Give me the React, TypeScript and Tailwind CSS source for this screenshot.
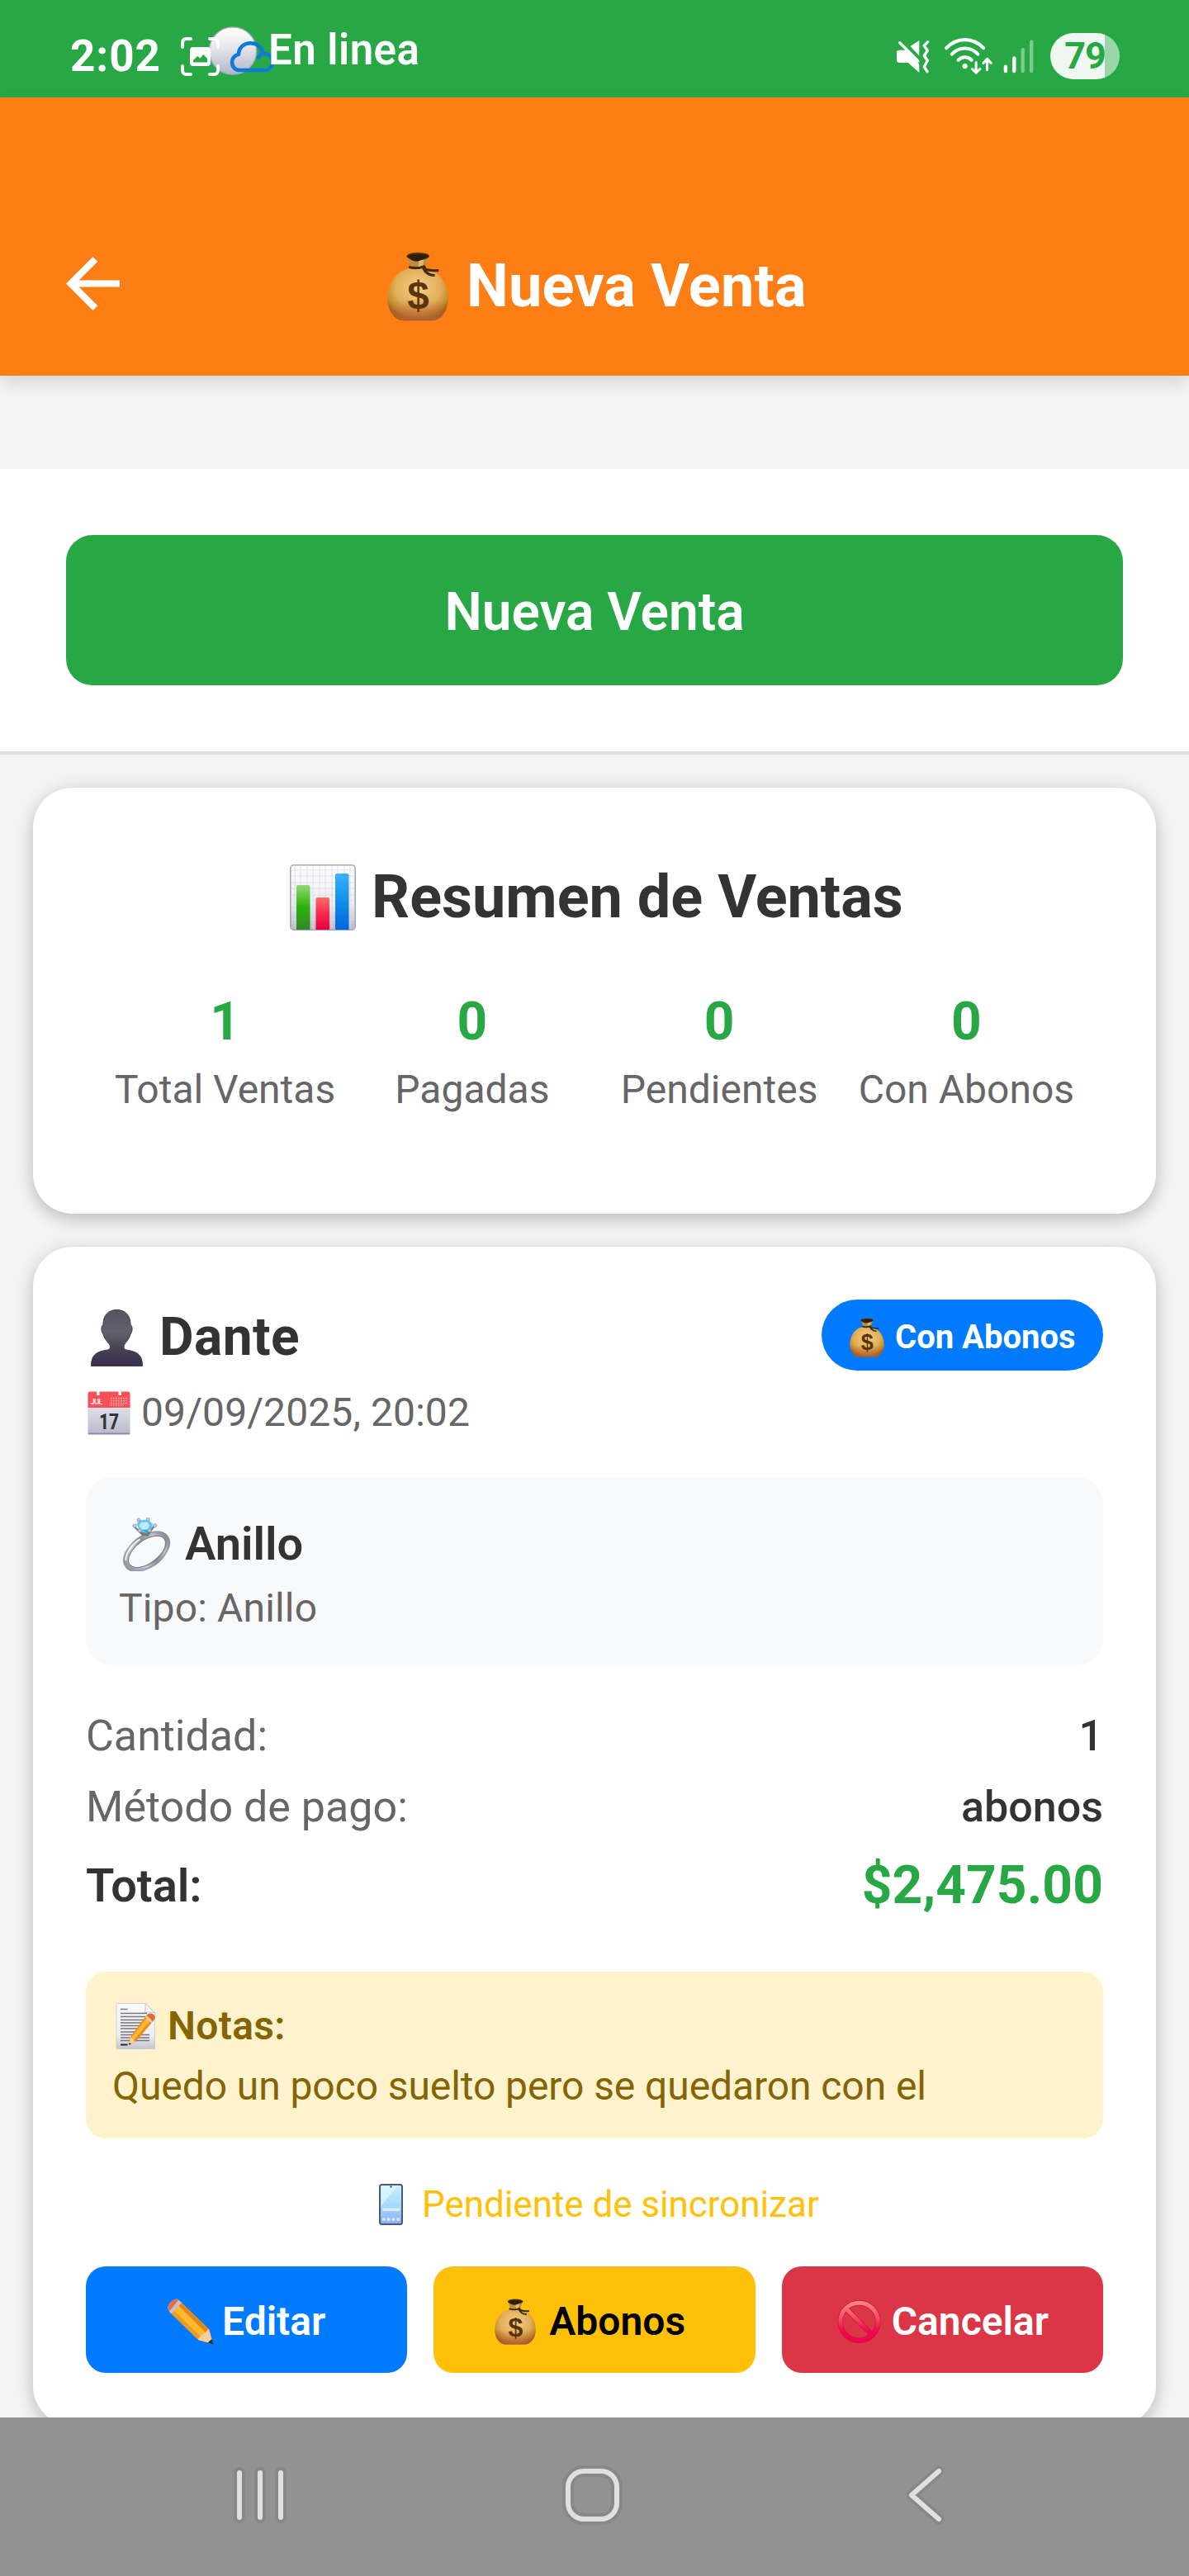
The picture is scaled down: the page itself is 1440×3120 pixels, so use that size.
import type { ReactNode } from "react";

function MoneyBag({ className, id }: { className: string; id: string }) {
  return (
    <svg className={className} viewBox="116 105 221 251" preserveAspectRatio="none">
      <defs>
        <radialGradient id={id} cx="0.5" cy="0.38" r="0.62">
          <stop offset="0" stopColor="#f3cf86" />
          <stop offset="0.6" stopColor="#e3af5a" />
          <stop offset="0.85" stopColor="#c58c2c" />
          <stop offset="1" stopColor="#935f10" />
        </radialGradient>
        <linearGradient id={id + "b"} x1="0" y1="0" x2="0" y2="1">
          <stop offset="0.6" stopColor="#b9603a" stopOpacity="0" />
          <stop offset="1" stopColor="#b9603a" stopOpacity="0.8" />
        </linearGradient>
      </defs>
      <path d="M197 163C145 176 117 224 117 274C117 315 140 354 175 354H277C313 354 336 315 336 274C336 226 311 181 262 166Z" fill={`url(#${id})`} />
      <path d="M197 163C145 176 117 224 117 274C117 315 140 354 175 354H277C313 354 336 315 336 274C336 226 311 181 262 166Z" fill={`url(#${id}b)`} />
      <path d="M190 128L200 158H252L265 126Z" fill="#c08d3c" />
      <path d="M228 130L231 160L244 158L250 126Z" fill="#e2b878" />
      <ellipse cx="227" cy="121" rx="41" ry="14" fill="#5a3d12" />
      <path d="M188 122C200 132 212 144 232 138C248 130 262 128 267 120C262 110 192 110 188 122Z" fill="#2e2008" />
      <path d="M194 160C212 166 236 164 250 158L252 166C262 172 282 174 302 172M246 164C254 180 270 190 288 190" fill="none" stroke="#3f2c10" strokeWidth="9" strokeLinejoin="round" />
      <text x="228" y="310" textAnchor="middle" fontFamily="Liberation Sans, sans-serif" fontWeight="700" fontSize="142" fill="#5b3509">$</text>
    </svg>
  );
}

function BarChart() {
  return (
    <svg className="h-20 w-20 shrink-0" viewBox="0 0 80 80">
      <defs>
        <linearGradient id="cb" x1="0" y1="0" x2="0" y2="1">
          <stop offset="0" stopColor="#ffffff" />
          <stop offset="0.6" stopColor="#ededf1" />
          <stop offset="1" stopColor="#b9b7c6" />
        </linearGradient>
        <linearGradient id="cg" x1="0" y1="0" x2="0" y2="1">
          <stop offset="0" stopColor="#94d973" />
          <stop offset="0.5" stopColor="#2bb10a" />
          <stop offset="1" stopColor="#2f8a2a" />
        </linearGradient>
        <linearGradient id="cr" x1="0" y1="0" x2="0" y2="1">
          <stop offset="0" stopColor="#ff6b68" />
          <stop offset="0.5" stopColor="#fb2a4b" />
          <stop offset="1" stopColor="#e4003f" />
        </linearGradient>
        <linearGradient id="cl" x1="0" y1="0" x2="0" y2="1">
          <stop offset="0" stopColor="#3fb1f8" />
          <stop offset="0.5" stopColor="#0f8fe6" />
          <stop offset="1" stopColor="#0563e3" />
        </linearGradient>
      </defs>
      <rect x="0.8" y="0.8" width="78.4" height="78.4" rx="4" fill="url(#cb)" stroke="#a9a8b4" strokeWidth="1.6" />
      <path d="M6 2V78M13 2V78M21 2V78M28 2V78M36 2V78M43 2V78M51 2V78M58 2V78M66 2V78M73 2V78M2 7H78M2 14H78M2 22H78M2 29H78M2 37H78M2 44H78M2 52H78M2 59H78M2 67H78" stroke="#d6dbe4" strokeWidth="0.8" fill="none" />
      <path d="M8 79V27Q8 25 10 25H22.500Q24.500 25 24.500 27V79Z" fill="url(#cg)" />
      <path d="M31.500 79V42Q31.500 40 33.500 40H46Q48 40 48 42V79Z" fill="url(#cr)" />
      <path d="M55 79V13Q55 11 57 11H69.500Q71.500 11 71.500 13V79Z" fill="url(#cl)" />
    </svg>
  );
}

function Person() {
  return (
    <svg className="h-[69px] w-[63px] shrink-0" viewBox="0 0 63 69">
      <defs>
        <linearGradient id="pg" x1="0" y1="0" x2="0" y2="1">
          <stop offset="0" stopColor="#55545f" />
          <stop offset="0.4" stopColor="#62606c" />
          <stop offset="0.7" stopColor="#454253" />
          <stop offset="1" stopColor="#3b2c50" />
        </linearGradient>
      </defs>
      <path d="M31.500 0.500C42 0.500 48 7 48 18.500C51 20 50.500 27 48 30C46 38 40 41 40 45C40 50 44 48.500 50 50.500C59 53 62.500 58 62.500 68.500H0.500C0.500 58 4 53 13 50.500C19 48.500 23.500 50 23.500 45C23.500 41 17 38 15 30C12.500 27 12 20 15 18.500C15 7 21 0.500 31.500 0.500Z" fill="url(#pg)" stroke="#3d3a4b" strokeWidth="1" />
    </svg>
  );
}

function CalendarIcon() {
  return (
    <svg className="h-[53px] w-[52px] shrink-0" viewBox="0 0 52 53">
      <defs>
        <linearGradient id="kg" x1="0" y1="0" x2="0" y2="1">
          <stop offset="0" stopColor="#f6f6f8" />
          <stop offset="1" stopColor="#b9b8cb" />
        </linearGradient>
      </defs>
      <rect x="0.500" y="1" width="51" height="51" rx="2" fill="url(#kg)" />
      <rect x="0.500" y="50.500" width="51" height="2" rx="1" fill="#8f8ca6" />
      <path d="M0.500 20V2.500Q0.500 0.500 2.500 0.500H11V5H14.500V0.500H37.500V5H41V0.500H49.500Q51.500 0.500 51.500 2.500V20Z" fill="#fb4f57" />
      <path d="M28 8.500H49M28 11.500H49M28 14.500H49M28 17H44" stroke="#ffc0bd" strokeWidth="1.600" strokeDasharray="1.600 1.400" />
      <text x="3.500" y="15.500" fontFamily="Roboto, sans-serif" fontWeight="700" fontSize="9.500" textLength="15" fill="#ffe3e0">JUL</text>
      <text x="26" y="45.500" textAnchor="middle" fontFamily="Roboto, sans-serif" fontWeight="800" fontSize="26" textLength="24" lengthAdjust="spacingAndGlyphs" fill="#333238">17</text>
    </svg>
  );
}

function Ring() {
  return (
    <svg className="h-[66px] w-[59px] shrink-0" viewBox="52 50 178 202" preserveAspectRatio="none">
      <defs>
        <linearGradient id="rg" x1="0" y1="0" x2="1" y2="0">
          <stop offset="0" stopColor="#9a9aa6" />
          <stop offset="0.3" stopColor="#c9ccd4" />
          <stop offset="0.55" stopColor="#8b8d98" />
          <stop offset="0.8" stopColor="#c3c7cd" />
          <stop offset="1" stopColor="#8a8c96" />
        </linearGradient>
      </defs>
      <g transform="rotate(-37 141 179)">
        <ellipse cx="141" cy="179" rx="88" ry="51" fill="none" stroke="url(#rg)" strokeWidth="19" />
        <ellipse cx="141" cy="179" rx="93" ry="56" fill="none" stroke="#8f929c" strokeWidth="3" />
        <ellipse cx="142" cy="181" rx="79" ry="43" fill="none" stroke="#787a87" strokeWidth="3" />
        <path d="M60 160A88 51 0 0 1 150 128" fill="none" stroke="#eef1f4" strokeWidth="6" />
      </g>
      <path d="M93 84L126 118L146 120L171 82L150 104L134 108L112 100Z" fill="#6f7c86" stroke="#6f7c86" strokeWidth="5" strokeLinejoin="round" />
      <path d="M104 78L116 63L146 61L163 76L160 94L142 112L118 104Z" fill="#62c9f7" />
      <path d="M113 82L124 71L144 70L152 82L144 98L124 98Z" fill="#b9ecff" />
      <path d="M144 98L160 94L142 112L124 98Z" fill="#33a7e6" />
      <g fill="#c4ccd2" stroke="#7f8a93" strokeWidth="2">
        <circle cx="112" cy="62" r="6" />
        <circle cx="146" cy="60" r="6" />
        <circle cx="97" cy="84" r="6.500" />
        <circle cx="171" cy="83" r="6.500" />
        <circle cx="116" cy="101" r="6.500" />
        <circle cx="152" cy="101" r="6.500" />
      </g>
    </svg>
  );
}

function Memo() {
  return (
    <svg className="h-14 w-12 shrink-0" viewBox="0 0 48 56">
      <defs>
        <linearGradient id="mg" x1="0" y1="0" x2="0" y2="1">
          <stop offset="0" stopColor="#fbfbfc" />
          <stop offset="0.7" stopColor="#eeeef2" />
          <stop offset="1" stopColor="#c5c4d2" />
        </linearGradient>
      </defs>
      <path d="M1 0.500H36L47.500 12V55.500H1Z" fill="url(#mg)" stroke="#c6c5cd" strokeWidth="0.800" />
      <path d="M36 0.500C36.500 6 36 9 35 12C39 10.500 43 11 47.500 12Z" fill="#ffffff" stroke="#b5b4bd" strokeWidth="0.800" />
      <path d="M6 7.500H14.500M6 12.500H38M6 16.500H38M6 20.500H38M6 24H36M6 27.500H36M6 31H34M6 35H32M6 38.500H41M6 42H41M6 45.500H41" stroke="#77767f" strokeWidth="1.300" />
      <path d="M6 50.500H14.500" stroke="#2b2a30" strokeWidth="2" />
      <path d="M38 14L42 12.500Q48 13.500 47.500 18.500L45.500 22L24 47L16 51L18 41Z" fill="#f08a1d" />
      <path d="M38.500 17L43 20L22 45L19 42Z" fill="#ffb82e" />
      <path d="M18 41L24 47L16 51Z" fill="#f0cf9c" />
      <path d="M16.500 48L19 49.500L16 51Z" fill="#33302e" />
      <path d="M38 14L42 12.500Q48 13.500 47.500 18.500L45.500 22Z" fill="#e0673c" />
      <path d="M36.500 16L44 23.500" stroke="#d9d4d2" strokeWidth="2" />
    </svg>
  );
}

function PhoneEmoji() {
  return (
    <svg className="h-[50px] w-[29px] shrink-0" viewBox="0 0 29 50">
      <defs>
        <linearGradient id="fg" x1="0" y1="0" x2="0" y2="1">
          <stop offset="0" stopColor="#c9f1fb" />
          <stop offset="0.5" stopColor="#a9dcfa" />
          <stop offset="1" stopColor="#86aef8" />
        </linearGradient>
      </defs>
      <rect x="1" y="1" width="27" height="48" rx="2.500" fill="url(#fg)" stroke="#4d5b70" strokeWidth="2" />
      <path d="M2.500 27V2.500H22Z" fill="#e2f8fd" opacity="0.700" />
      <rect x="13.500" y="2.500" width="2" height="2" fill="#333e4f" />
      <rect x="4" y="29.500" width="21" height="3.500" fill="#d4edfd" />
      <path d="M4 43H25" stroke="#dbe9ff" strokeWidth="3.600" strokeDasharray="3.600 2.200" />
    </svg>
  );
}

function Pencil() {
  return (
    <svg className="h-[56px] w-[56px] shrink-0" viewBox="0 0 56 56">
      <path d="M0.500 12C0 7 6 1 11 0.500L15 3L50 37L55 55L37 50L3 17Z" fill="#f39a1c" />
      <path d="M6 13L12 7L46 41L40 46Z" fill="#ffb92f" />
      <path d="M12 7L16 5L50 38L46 41Z" fill="#e88316" />
      <path d="M50 37L55 55L37 50C38 46 40 46 41 45C43 42 45 42 46 41C47 39 48 38 50 37Z" fill="#f3cf9f" />
      <path d="M53.500 49L55.500 55.500L48.500 53.500Z" fill="#2f2c33" />
      <path d="M3 17L0.500 12C0 7 6 1 11 0.500L15 3L17 5L5 18Z" fill="#c9c2c4" />
      <path d="M2.500 15L0.500 12C0 7 6 1 11 0.500L13 2Z" fill="#e86a4c" />
    </svg>
  );
}

function Forbidden() {
  return (
    <svg className="h-[52px] w-[53px] shrink-0" viewBox="0 0 53 52">
      <defs>
        <linearGradient id="ng" gradientUnits="userSpaceOnUse" x1="0" y1="0" x2="0" y2="52">
          <stop offset="0" stopColor="#ff8c88" />
          <stop offset="0.450" stopColor="#fa4463" />
          <stop offset="0.700" stopColor="#f6064c" />
          <stop offset="1" stopColor="#f4004a" />
        </linearGradient>
      </defs>
      <circle cx="26.500" cy="26" r="22.800" fill="none" stroke="#b51f3c" strokeWidth="6.400" />
      <path d="M10.500 10L42.500 42" stroke="#b51f3c" strokeWidth="6.400" />
      <circle cx="26.500" cy="26" r="22.800" fill="none" stroke="url(#ng)" strokeWidth="5" />
      <path d="M10 9.500L43 42.500" stroke="url(#ng)" strokeWidth="5" />
    </svg>
  );
}

function StatusLeftIcons() {
  return (
    <svg className="ml-[25px] h-[62px] w-[115px] shrink-0" viewBox="218 31 115 62">
      <defs>
        <linearGradient id="ball" x1="0" y1="0" x2="0" y2="1">
          <stop offset="0" stopColor="#ffffff" />
          <stop offset="0.400" stopColor="#e8e8ec" />
          <stop offset="1" stopColor="#b4b6c9" />
        </linearGradient>
      </defs>
      <circle cx="282" cy="61.500" r="28.600" fill="url(#ball)" stroke="#a9acb8" strokeWidth="1.400" />
      <path d="M221 57V52Q221 47 226 47H231M254 47H259Q264 47 264 52V57M221 80V85Q221 90 226 90H231M254 90H259Q264 90 264 85V80" fill="none" stroke="#fff" strokeWidth="3.800" strokeLinecap="round" />
      <path fillRule="evenodd" d="M234 57H251Q255 57 255 61V76Q255 80 251 80H234Q230 80 230 76V61Q230 57 234 57ZM234 75.500H251V71L246.500 66L242.500 70.500L239 68L234 73Z" fill="#fff" />
      <path d="M313 69.500C314 66.500 318 64.500 321.500 65C327 66 330 70 330 75C330 81 326 85 320.500 85H290C285 85 281 81 281 75.500C281 70.500 284.500 66.500 289 66C289 58 295 52.200 303.500 52.200C311 52.200 316 56.500 318.500 64" fill="none" stroke="#0b7bdb" strokeWidth="4.600" strokeLinecap="round" strokeLinejoin="round" />
    </svg>
  );
}

function StatusBar() {
  return (
    <div className="flex h-[118px] w-full shrink-0 items-start bg-[#28a745] pl-[85px] pr-[84px] text-white">
      <span className="mt-[34px] w-[108px] whitespace-nowrap text-[53px] font-bold leading-[68px] tracking-[0.9px]">2:02</span>
      <div className="mt-[31px]">
        <StatusLeftIcons />
      </div>
      <span className="-ml-[8px] mt-[30px] whitespace-nowrap text-[51px] font-semibold leading-[62px] tracking-[0.45px]">En linea</span>
      <div className="ml-auto mt-[40px] flex h-[56px] items-center">
        <svg className="h-[41px] w-[41px]" viewBox="138 144 122 122">
          <path d="M141 191Q141 182 150 182H172L222 232V263L182 227H150Q141 227 141 218Z" fill="#fff" />
          <path d="M190 168L222 147V202Z" fill="#fff" />
          <path d="M152 155L218 221" stroke="#fff" strokeWidth="10" strokeLinecap="round" />
          <path d="M253 152L240 166L252 184L240 202L252 220L240 242L251 259" fill="none" stroke="#fff" strokeWidth="10" strokeLinecap="round" strokeLinejoin="round" />
        </svg>
        <svg className="ml-[17px] mt-[-1px] h-[46px] w-[60px]" viewBox="312 136 178 136">
          <g fill="none" stroke="#fff" strokeLinecap="round" strokeLinejoin="round">
            <path d="M321 175C360 135 416 135 455 175" strokeWidth="12" />
            <path d="M341 197C368 169 408 169 435 197" strokeWidth="12" />
            <path d="M364 218C378 204 398 204 412 218" strokeWidth="12" />
            <path d="M428 226V264M414 250L428 264L442 250M468 254V215M454 229L468 214L482 229" strokeWidth="9" />
          </g>
          <circle cx="388" cy="240" r="9" fill="#fff" />
        </svg>
        <svg className="ml-[12px] h-[41px] w-[38px]" viewBox="526 144 112 122">
          <g strokeWidth="13" strokeLinecap="round" stroke="#fff">
            <path d="M534 241V257M565 211V257" />
            <path d="M596 180V257M627 152V257" opacity="0.400" />
          </g>
        </svg>
        <div className="ml-[19px] flex h-[56px] w-[84px] items-center justify-center rounded-full bg-[linear-gradient(90deg,#eef8f0_78.500%,#9bd6a8_78.500%)]">
          <span className="text-[45px] font-bold leading-[54px] tracking-[-1px] text-[#28a745]">79</span>
        </div>
      </div>
    </div>
  );
}

function Header() {
  return (
    <header className="relative z-10 flex h-[337px] shrink-0 items-start bg-[#fd7e14] pl-20 shadow-[0_8px_20px_rgba(0,0,0,0.13)]">
      <svg className="mt-[193px] h-[65px] w-[65px] shrink-0" viewBox="4 4 16 16">
        <path d="M20 11H7.830l5.590-5.590L12 4l-8 8 8 8 1.410-1.410L7.830 13H20v-2z" fill="#fff" />
      </svg>
      <div className="ml-[324px] mt-[184px] flex items-center">
        <MoneyBag id="bagh" className="h-[84px] w-[74px] shrink-0" />
        <h1 className="ml-[22px] whitespace-nowrap text-[72px] font-bold leading-[90px] tracking-[0.2px] text-white">Nueva Venta</h1>
      </div>
    </header>
  );
}

function Stat({ value, label }: { value: string; label: string }) {
  return (
    <div className="flex flex-col items-center whitespace-nowrap">
      <span className="text-[64px] font-bold leading-[84px] text-[#28a745]">{value}</span>
      <span className="text-5xl leading-[80px] text-[#666]">{label}</span>
    </div>
  );
}

function DetailRow({ label, children }: { label: string; children: ReactNode }) {
  return (
    <div className="flex h-[86px] items-center justify-between text-[52px] leading-[70px]">
      <span className="text-[#666]">{label}</span>
      <span className="font-medium text-[#333]">{children}</span>
    </div>
  );
}

function SummaryCard() {
  return (
    <section className="mx-10 mt-10 h-[516px] shrink-0 rounded-[48px] bg-white px-20 pt-[88px] shadow-[0_8px_18px_rgba(0,0,0,0.15),0_2px_30px_rgba(0,0,0,0.10)]">
      <div className="flex h-[90px] items-center pl-[231px]">
        <BarChart />
        <h2 className="ml-[19px] whitespace-nowrap text-[72px] font-bold leading-[90px] text-[#333]">Resumen de Ventas</h2>
      </div>
      <div className="mt-[64px] grid grid-cols-4 pl-[3px]">
        <Stat value="1" label="Total Ventas" />
        <Stat value="0" label="Pagadas" />
        <Stat value="0" label="Pendientes" />
        <Stat value="0" label="Con Abonos" />
      </div>
    </section>
  );
}

function SaleCard() {
  return (
    <section className="mx-10 mt-10 h-[1428px] shrink-0 rounded-[48px] bg-white px-16 pt-16 shadow-[0_8px_18px_rgba(0,0,0,0.15),0_2px_30px_rgba(0,0,0,0.10)]">
      <div className="flex items-start justify-between">
        <div className="pt-1">
          <div className="flex h-[84px] items-center pl-[6px]">
            <Person />
            <span className="ml-[20px] text-[64px] font-bold leading-[84px] tracking-[0.4px] text-[#333]">Dante</span>
          </div>
          <div className="mt-[17px] flex h-16 items-center pl-[2px]">
            <CalendarIcon />
            <span className="ml-[13px] whitespace-nowrap text-5xl leading-[64px] tracking-[0.1px] text-[#666]">09/09/2025, 20:02</span>
          </div>
        </div>
        <div className="flex h-[86px] w-[341px] items-center rounded-full bg-[#007bff] pl-[34px] pt-[5px]">
          <MoneyBag id="bagb" className="h-[48px] w-[42px] shrink-0" />
          <span className="ml-[13px] whitespace-nowrap text-[40px] font-bold leading-[56px] text-white">Con Abonos</span>
        </div>
      </div>

      <div className="mt-[46px] h-[228px] rounded-[32px] bg-[#f8f9fa] px-10 pt-[44px]">
        <div className="flex h-[74px] items-center pl-[4px]">
          <Ring />
          <span className="ml-[17px] text-[56px] font-semibold leading-[74px] text-[#333]">Anillo</span>
        </div>
        <p className="mt-[9px] text-5xl leading-[64px] tracking-[0.15px] text-[#666]">Tipo: Anillo</p>
      </div>

      <div className="mt-[43px]">
        <DetailRow label="Cantidad:">1</DetailRow>
        <DetailRow label="Método de pago:">abonos</DetailRow>
        <div className="flex h-[104px] items-center justify-between leading-[84px]">
          <span className="text-[56px] font-semibold text-[#333]">Total:</span>
          <span className="text-[64px] font-bold tracking-[0.1px] text-[#28a745]">$2,475.00</span>
        </div>
      </div>

      <div className="mt-[52px] h-[202px] rounded-3xl bg-[#fff3cd] px-8 pt-[34px] text-[#856404]">
        <div className="flex h-16 items-center pl-[4px]">
          <Memo />
          <span className="ml-[15px] text-5xl font-semibold leading-[64px] tracking-[0.3px]">Notas:</span>
        </div>
        <p className="mt-[9px] whitespace-nowrap text-5xl leading-[64px] tracking-[-0.08px]">Quedo un poco suelto pero se quedaron con el</p>
      </div>

      <div className="mt-[50px] flex h-[60px] items-center pl-[355px]">
        <PhoneEmoji />
        <span className="ml-[23px] whitespace-nowrap text-[44px] leading-[60px] tracking-[-0.05px] text-[#ffc107]">Pendiente de sincronizar</span>
      </div>

      <div className="mt-[45px] grid h-[129px] grid-cols-3 gap-8">
        <button className="flex items-center rounded-3xl bg-[#007bff] pl-[99px] pt-1 text-white">
          <Pencil />
          <span className="ml-[10px] text-5xl font-semibold leading-[64px]">Editar</span>
        </button>
        <button className="flex items-center rounded-3xl bg-[#ffc107] pl-[74px] pt-1 text-black">
          <MoneyBag id="baga" className="h-[56px] w-[50px] shrink-0" />
          <span className="ml-[16px] text-5xl font-semibold leading-[64px]">Abonos</span>
        </button>
        <button className="flex items-center rounded-3xl bg-[#dc3545] pl-[67px] pt-1 text-white">
          <Forbidden />
          <span className="ml-[13px] text-5xl font-semibold leading-[64px]">Cancelar</span>
        </button>
      </div>
    </section>
  );
}

function SystemNav() {
  return (
    <nav className="relative z-10 flex h-[192px] shrink-0 items-center bg-[#929292] pb-[4px] pl-[278px]">
      <svg className="h-[76px] w-[74px]" viewBox="278 2984 74 76" fill="none" strokeLinecap="round">
        <path d="M290 2995V3049M315 2995V3049M340 2995V3049" stroke="#888" strokeWidth="14" />
        <path d="M290 2995V3049M315 2995V3049M340 2995V3049" stroke="#e0e0e0" strokeWidth="6" />
      </svg>
      <svg className="ml-[326px] h-[76px] w-[78px]" viewBox="678 2984 78 76" fill="none">
        <rect x="688" y="2993" width="59" height="58" rx="19" stroke="#888" strokeWidth="14" />
        <rect x="688" y="2993" width="59" height="58" rx="19" stroke="#e0e0e0" strokeWidth="6" />
      </svg>
      <svg className="ml-[338px] h-[76px] w-[56px]" viewBox="1094 2984 56 76" fill="none" strokeLinecap="round" strokeLinejoin="round">
        <path d="M1137 2993L1104 3022L1137 3051" stroke="#888" strokeWidth="13" />
        <path d="M1137 2993L1104 3022L1137 3051" stroke="#e0e0e0" strokeWidth="6" />
      </svg>
    </nav>
  );
}

export default function App() {
  return (
    <div className="flex h-[3120px] w-[1440px] flex-col overflow-hidden bg-[#f4f4f4] font-['Roboto',sans-serif]">
      <StatusBar />
      <Header />
      <main className="flex h-[2473px] shrink-0 flex-col overflow-hidden pt-[113px]">
        <div className="h-[346px] shrink-0 border-b-4 border-[#dfdfdf] bg-white px-20 pt-20">
          <button className="flex h-[182px] w-full items-center justify-center rounded-[32px] bg-[#28a745] pt-[6px] text-[64px] font-semibold leading-[84px] text-white">
            Nueva Venta
          </button>
        </div>
        <SummaryCard />
        <SaleCard />
      </main>
      <SystemNav />
    </div>
  );
}
